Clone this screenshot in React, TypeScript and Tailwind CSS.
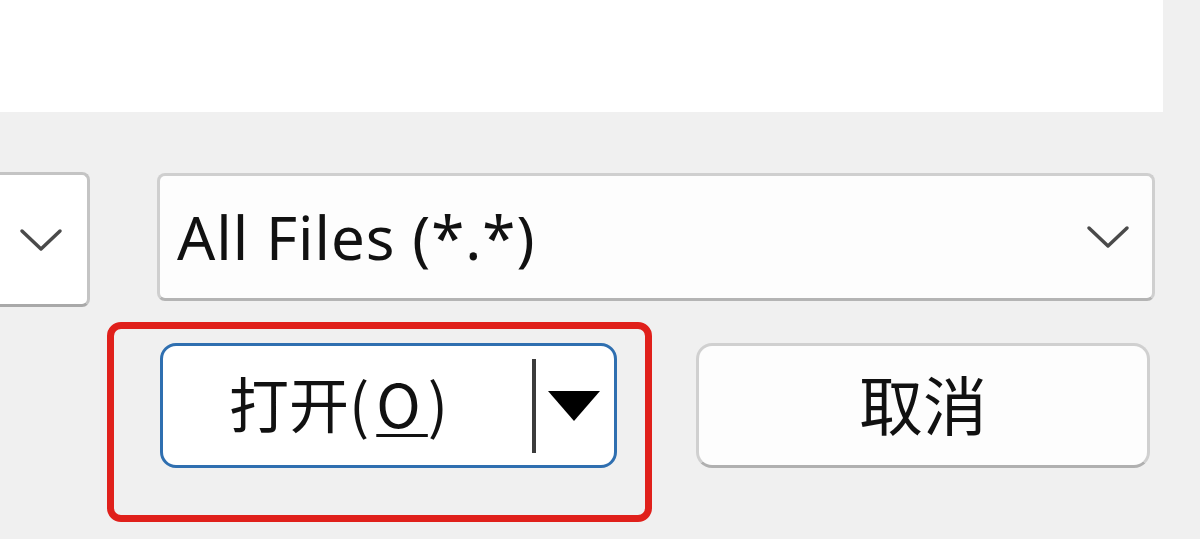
import React from 'react';

function Chevron({ className }: { className?: string }) {
  return (
    <svg viewBox="0 0 44 24" className={className} fill="none">
      <path d="M3 3 L22 21 L41 3" stroke="#4a4a4a" strokeWidth="3.5" strokeLinecap="round" strokeLinejoin="round" />
    </svg>
  );
}

export default function App() {
  return (
    <div
      className="w-[1200px] h-[539px] overflow-hidden bg-[#f0f0f0] flex flex-col"
      style={{ fontFamily: "'Noto Sans', 'Noto Sans CJK SC', sans-serif" }}
    >
      {/* file list area */}
      <div className="w-[1163px] h-[112px] shrink-0 bg-white" />

      {/* name / type row */}
      <div className="flex items-start mt-[60px]">
        <div className="w-[90px] h-[135px] shrink-0 bg-white border-[3px] border-l-0 border-[#c4c4c4] border-b-[#a9a9a9] rounded-r-[8px] flex items-center justify-end pr-[24px]">
          <Chevron className="w-[44px] h-[24px]" />
        </div>
        <div className="ml-[67px] mt-[1px] w-[998px] h-[128px] bg-[#fdfdfd] border-[3px] border-[#cfcfcf] border-b-[#b4b4b4] rounded-[8px] flex items-center pl-[17px] pr-[22px]">
          <span className="text-[60px] leading-none text-[#111] tracking-[1px]">All Files (*.*)</span>
          <Chevron className="ml-auto w-[44px] h-[24px]" />
        </div>
      </div>

      {/* buttons row */}
      <div className="flex items-start mt-[15px]">
        <div className="ml-[107px] w-[545px] h-[200px] shrink-0 border-[7px] border-[#e0201b] rounded-[14px] pl-[46px] pt-[14px]">
          <div className="w-[457px] h-[125px] bg-white border-[3px] border-[#2f6fb0] rounded-[16px] flex items-center">
            <span
              className="ml-[66px] pb-[8px] text-[60px] leading-none text-[#111]"
              style={{ fontFamily: "'Noto Sans CJK SC', sans-serif" }}
            >
              打开<span className="tracking-[7px]">(<span className="underline decoration-[3px] underline-offset-[6px]">O</span>)</span>
            </span>
            <div className="ml-auto w-[4px] h-[94px] bg-[#3c3c3c]" />
            <svg viewBox="0 0 52 30" className="ml-[12px] mr-[14px] w-[52px] h-[30px]">
              <path d="M0 0 H52 L26 30 Z" fill="#000" />
            </svg>
          </div>
        </div>
        <div className="ml-[44px] mt-[21px] w-[454px] h-[125px] bg-[#fdfdfd] border-[3px] border-[#d0d0d0] border-b-[#b0b0b0] rounded-[16px] flex items-center justify-center">
          <span
            className="pb-[8px] text-[64px] leading-none text-[#111]"
            style={{ fontFamily: "'Noto Sans CJK SC', sans-serif" }}
          >
            取消
          </span>
        </div>
      </div>
    </div>
  );
}
